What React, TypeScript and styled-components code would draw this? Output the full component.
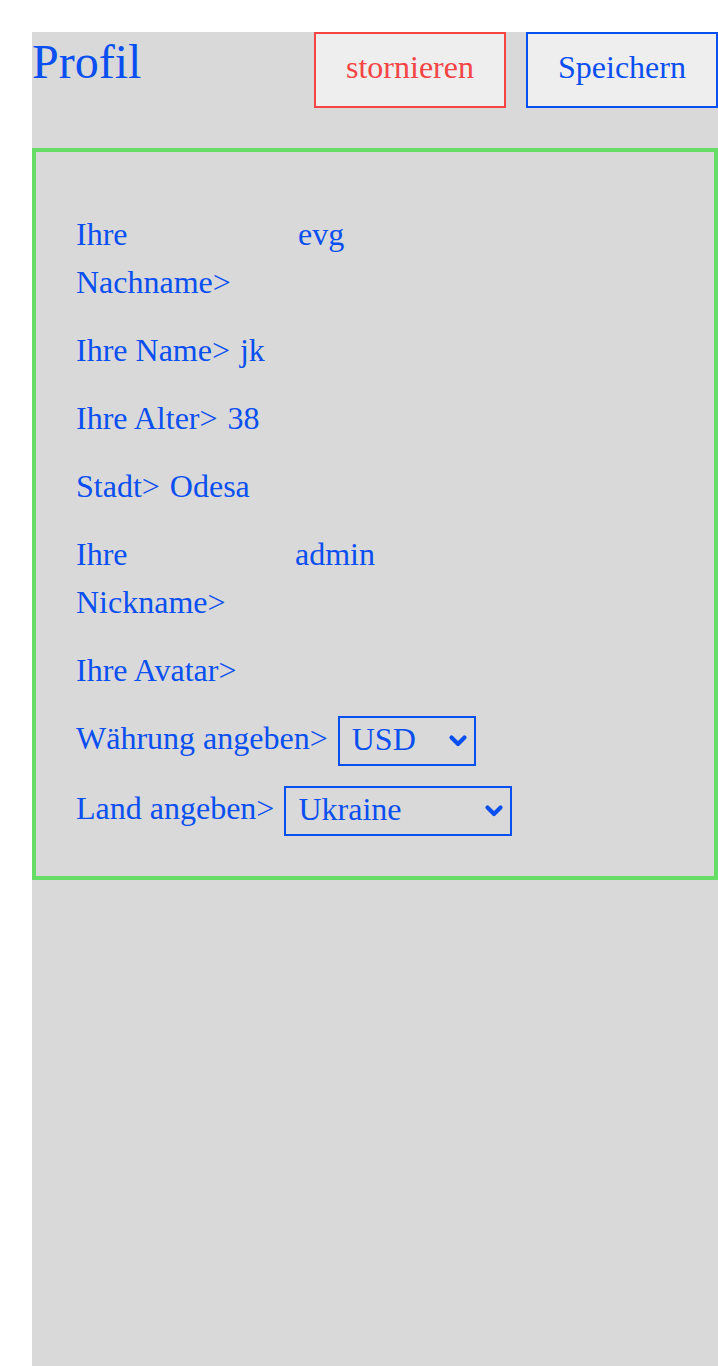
import React, { useState } from "react";
import styled, { createGlobalStyle } from "styled-components";

const GlobalStyle = createGlobalStyle`
  html, body {
    margin: 0;
    padding: 0;
    background: #ffffff;
  }
  body {
    padding: 32px 0 0 32px;
    font-family: "Liberation Serif", "Times New Roman", serif;
  }
`;

function Chevron() {
  return (
    <ChevronIcon width="20" height="14" viewBox="0 0 20 14">
      <polyline points="3.5,3.5 10,10 16.5,3.5" fill="none" stroke="#0a4ff0" strokeWidth="4.2" strokeLinecap="round" strokeLinejoin="round" />
    </ChevronIcon>
  );
}

export default function App() {
  const [currency, setCurrency]: any = useState("USD");
  const [country, setCountry]: any = useState("Ukraine");

  return (
    <>
      <GlobalStyle />
      <Page>
        <Header>
          <Title>Profil</Title>
          <Buttons>
            <ActionButton $tone="#f44444">stornieren</ActionButton>
            <ActionButton $tone="#0a4ff0">Speichern</ActionButton>
          </Buttons>
        </Header>
        <Card>
          <Row>
            <Label $width={212}><Wrapped>Ihre Nachname&gt;</Wrapped></Label>
            <Value>evg</Value>
          </Row>
          <Row>
            <Label>Ihre Name&gt;</Label>
            <Value>jk</Value>
          </Row>
          <Row>
            <Label>Ihre Alter&gt;</Label>
            <Value>38</Value>
          </Row>
          <Row>
            <Label>Stadt&gt;</Label>
            <Value>Odesa</Value>
          </Row>
          <Row>
            <Label $width={209}><Wrapped>Ihre Nickname&gt;</Wrapped></Label>
            <Value>admin</Value>
          </Row>
          <Row>
            <Label>Ihre Avatar&gt;</Label>
          </Row>
          <FieldRow $offset={2}>
            <Label>Währung angeben&gt;</Label>
            <SelectWrap $width={138}>
              <Select value={currency} onChange={(e) => setCurrency(e.target.value)}>
                <option>USD</option>
                <option>EUR</option>
                <option>UAH</option>
              </Select>
              <Chevron />
            </SelectWrap>
          </FieldRow>
          <FieldRow>
            <Label>Land angeben&gt;</Label>
            <SelectWrap $width={228}>
              <Select value={country} onChange={(e) => setCountry(e.target.value)}>
                <option>Ukraine</option>
                <option>Germany</option>
                <option>Poland</option>
              </Select>
              <Chevron />
            </SelectWrap>
          </FieldRow>
        </Card>
      </Page>
    </>
  );
}

const Page = styled.div`
  background: #d9d9d9;
  width: 686px;
  min-height: calc(100vh - 32px);
  color: #0a4ff0;
`;

const Header = styled.div`
  display: flex;
  flex-direction: row;
  justify-content: space-between;
  align-items: flex-start;
  margin-bottom: 40px;
`;

const Title = styled.h1`
  margin: 0;
  font-size: 48px;
  font-weight: normal;
  line-height: 60px;
`;

const Buttons = styled.div`
  display: flex;
  flex-direction: row;
  gap: 20px;
`;

const ActionButton = styled.button<{ $tone: string }>`
  box-sizing: border-box;
  width: 192px;
  height: 76px;
  padding: 0 0 5px 0;
  background: #eeeeee;
  border: 2px solid ${(p) => p.$tone};
  color: ${(p) => p.$tone};
  font-family: "Liberation Serif", "Times New Roman", serif;
  font-size: 32px;
  cursor: pointer;
`;

const Card = styled.div`
  border: 4px solid #66dd66;
  padding: 58px 40px 40px 40px;
  display: flex;
  flex-direction: column;
  gap: 20px;
`;

const Row = styled.div`
  display: flex;
  flex-direction: row;
  align-items: baseline;
  gap: 10px;
  font-size: 32px;
  line-height: 48px;
`;

const Label = styled.span<{ $width?: number }>`
  ${(p) => (p.$width ? `flex: 0 0 ${p.$width}px;` : "")}
`;

const FieldRow = styled(Row)<{ $offset?: number }>`
  align-items: flex-start;
  margin-top: ${(p) => p.$offset || 0}px;

  ${Label} {
    margin-top: -2.5px;
  }
`;

const Wrapped = styled.span`
  display: block;
  width: min-content;
`;

const Value = styled.span``;

const SelectWrap = styled.span<{ $width: number }>`
  position: relative;
  display: inline-flex;
  width: ${(p) => p.$width}px;
`;

const Select = styled.select`
  box-sizing: border-box;
  appearance: none;
  -webkit-appearance: none;
  width: 100%;
  height: 50px;
  padding: 0 36px 4px 12px;
  border: 2px solid #0a4ff0;
  border-radius: 0;
  background: transparent;
  color: #0a4ff0;
  font-family: "Liberation Serif", "Times New Roman", serif;
  font-size: 32px;
  line-height: 42px;
  outline: none;
`;

const ChevronIcon = styled.svg`
  position: absolute;
  right: 8px;
  top: 18px;
  pointer-events: none;
`;
